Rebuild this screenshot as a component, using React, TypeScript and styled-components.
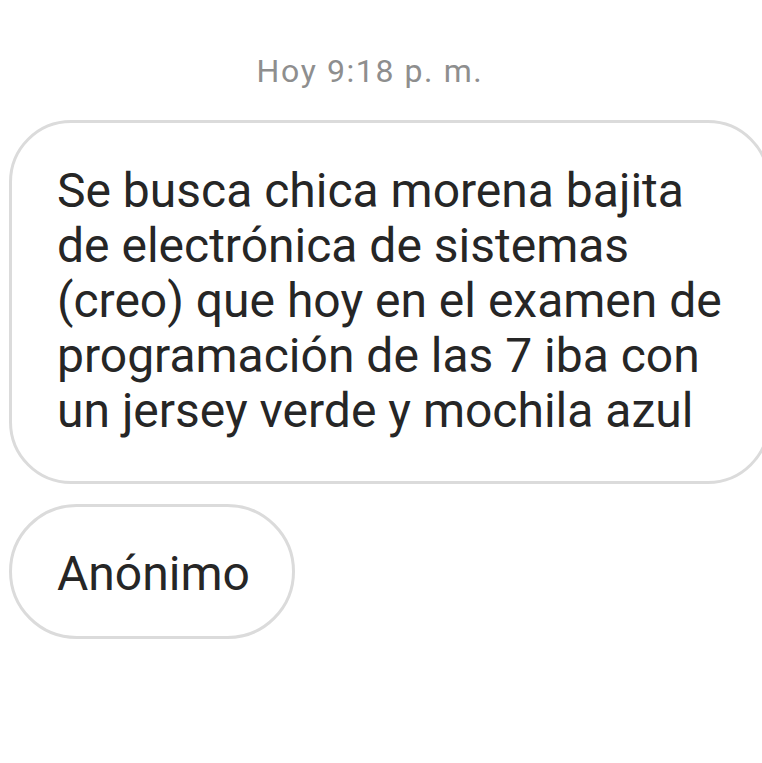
import styled, { createGlobalStyle } from 'styled-components';

const GlobalStyle = createGlobalStyle`
  html, body {
    margin: 0;
    padding: 0;
    background: #ffffff;
    overflow: hidden;
  }

  body {
    font-family: Roboto, 'Noto Sans', 'Liberation Sans', sans-serif;
    -webkit-font-smoothing: antialiased;
  }
`;

const Thread = styled.div`
  display: flex;
  flex-direction: column;
  align-items: flex-start;
  gap: 20px;
  width: 762px;
  height: 763px;
  padding: 51px 0 0 9px;
  box-sizing: border-box;
  overflow: hidden;
`;

const Timestamp = styled.div`
  align-self: stretch;
  padding-right: 31px;
  margin-bottom: 9px;
  text-align: center;
  font-size: 32px;
  line-height: 40px;
  letter-spacing: 1.6px;
  color: #8e8e8e;
`;

const Bubble = styled.div<{ $wide?: boolean }>`
  flex-shrink: 0;
  box-sizing: border-box;
  border: 3px solid #dbdbdb;
  border-radius: ${({ $wide }) => ($wide ? '62px' : '68px')};
  width: ${({ $wide }) => ($wide ? '761px' : 'auto')};
  padding: ${({ $wide }) => ($wide ? '40px 30px 43px 45px' : '39px 42px 35px 45px')};
  font-size: 48px;
  line-height: 55px;
  color: #262626;
  white-space: pre-line;
`;

export default function App() {
  return (
    <>
      <GlobalStyle />
      <Thread>
        <Timestamp>Hoy 9:18 p. m.</Timestamp>
        <Bubble $wide>
          {`Se busca chica morena bajita
de electrónica de sistemas
(creo) que hoy en el examen de
programación de las 7 iba con
un jersey verde y mochila azul`}
        </Bubble>
        <Bubble>Anónimo</Bubble>
      </Thread>
    </>
  );
}
